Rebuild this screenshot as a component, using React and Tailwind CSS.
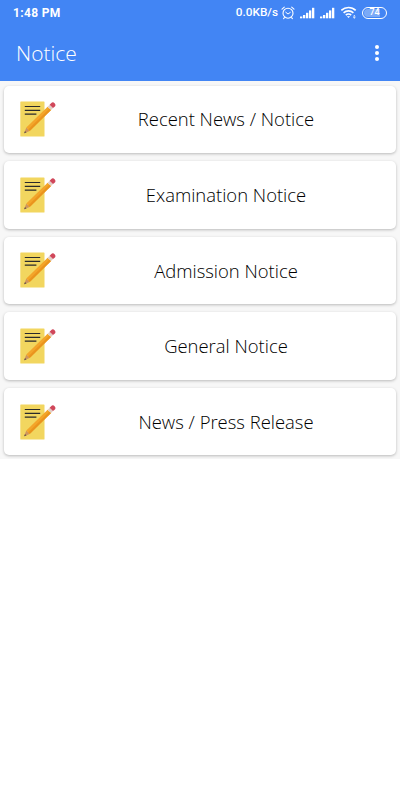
import React from "react";

const notices = [
  { id: 1, title: "Recent News / Notice" },
  { id: 2, title: "Examination Notice" },
  { id: 3, title: "Admission Notice" },
  { id: 4, title: "General Notice" },
  { id: 5, title: "News / Press Release" },
];

const AlarmIcon = () => (
  <svg width="14" height="14" viewBox="0 0 14 14" fill="none" stroke="currentColor" strokeLinecap="round">
    <circle cx="7" cy="7.2" r="5" strokeWidth="1.1" />
    <path d="M1 3.2 3.3 1.2M13 3.2 10.7 1.2M3.4 11.6 2.6 12.6M10.6 11.6l.8 1" strokeWidth="1.1" />
    <path d="M4.7 6.2 7 8l2.3-1.6" strokeWidth="1" />
  </svg>
);

const SignalIcon = () => (
  <svg width="16" height="12" viewBox="0 0 16 12" fill="currentColor">
    <rect x="0" y="9.5" width="2.3" height="1.8" />
    <rect x="3" y="8" width="2.3" height="3.3" />
    <rect x="6" y="5.8" width="2.3" height="5.5" />
    <rect x="9" y="3.4" width="2.3" height="7.9" />
    <rect x="12" y="0.8" width="2.3" height="10.5" />
  </svg>
);

const WifiIcon = () => (
  <svg width="17" height="13" viewBox="0 0 17 13" fill="none" stroke="currentColor">
    <path d="M0.3 4.4a10.4 10.4 0 0 1 14.4 0" strokeWidth="1.7" />
    <path d="M2.6 6.9a7 7 0 0 1 9.8 0" strokeWidth="1.6" />
    <path d="M4.8 9.1a3.8 3.8 0 0 1 5.4 0" strokeWidth="1.5" />
    <path d="M5.9 10.2h3.2L7.5 12z" fill="currentColor" stroke="none" />
    <path d="M11.9 10.6 13.3 9l1.4 1.6zM11.9 11.2l1.4 1.6 1.4-1.6z" fill="currentColor" stroke="none" />
  </svg>
);

const NoteIcon = () => (
  <svg width="36" height="36" viewBox="0 0 36 36" className="shrink-0">
    <rect x="0.3" y="0.5" width="24.2" height="35" rx="0.6" fill="#f2d65f" />
    <path d="M4.8 5.5h15.4M4.8 9.4h15.4M4.8 13.2h11.6" stroke="#29292b" strokeWidth="1.2" />
    <path d="M4.1 32.3 6.3 26.6 9.7 30.1z" fill="#cf955c" />
    <path d="M4.1 32.3 5 29.9 6.6 31.4z" fill="#665448" />
    <path d="M6.3 26.6 27.6 5.7 31.1 9.1 9.7 30.1z" fill="#f3a52a" />
    <path d="M8.2 28.5 29.5 7.5 31.1 9.1 9.7 30.1z" fill="#ea941e" />
    <path d="M27.6 5.7 29.6 3.7 33 7.1 31.1 9.1z" fill="#e2cfc6" />
    <path d="M29.6 3.7 31.1 2.2a2.45 2.45 0 0 1 3.5 3.5L33 7.1z" fill="#d0475a" />
  </svg>
);

const StatusBar = () => (
  <div className="flex h-[25px] items-center px-[13px] font-['Roboto',sans-serif] text-[12px] font-bold">
    <span className="tracking-[0.35px]">1:48 PM</span>
    <div className="ml-auto flex items-center">
      <span className="mr-[3px] text-[11.8px] font-medium">0.0KB/s</span>
      <AlarmIcon />
      <span className="ml-[5px]"><SignalIcon /></span>
      <span className="ml-[4px]"><SignalIcon /></span>
      <span className="ml-[5px]"><WifiIcon /></span>
      <span className="ml-[4px] flex h-[12px] w-[25px] items-center justify-center rounded-full border border-white p-px">
        <span className="flex h-full w-full items-center justify-center rounded-full bg-linear-to-r from-white/30 from-74% to-transparent to-74% text-[9px] leading-none font-medium">
          74
        </span>
      </span>
    </div>
  </div>
);

const NoticeCard = ({ title }) => (
  <div className="flex h-[67.6px] items-center rounded-[5px] bg-white pl-4 shadow-[0_1px_3px_rgba(0,0,0,0.25)]">
    <NoteIcon />
    <span className="flex-1 text-center text-[18.45px] font-light text-black">{title}</span>
  </div>
);

const App = () => {
  return (
    <div className="min-h-screen bg-white font-['Open_Sans',sans-serif]">
      <header className="h-[81px] bg-[#4285f4] text-white">
        <StatusBar />
        <div className="flex h-14 items-center justify-between pl-4 pr-[21px]">
          <h1 className="pt-px text-[21px] font-light">Notice</h1>
          <div className="flex flex-col gap-[2px]">
            <span className="size-[4px] rounded-full bg-white" />
            <span className="size-[4px] rounded-full bg-white" />
            <span className="size-[4px] rounded-full bg-white" />
          </div>
        </div>
      </header>

      <main className="flex flex-col gap-2 bg-[#f7f7f7] px-1 pt-[4.5px] pb-[3.5px]">
        {notices.map((notice) => (
          <NoticeCard key={notice.id} title={notice.title} />
        ))}
      </main>
    </div>
  );
};

export default App;
